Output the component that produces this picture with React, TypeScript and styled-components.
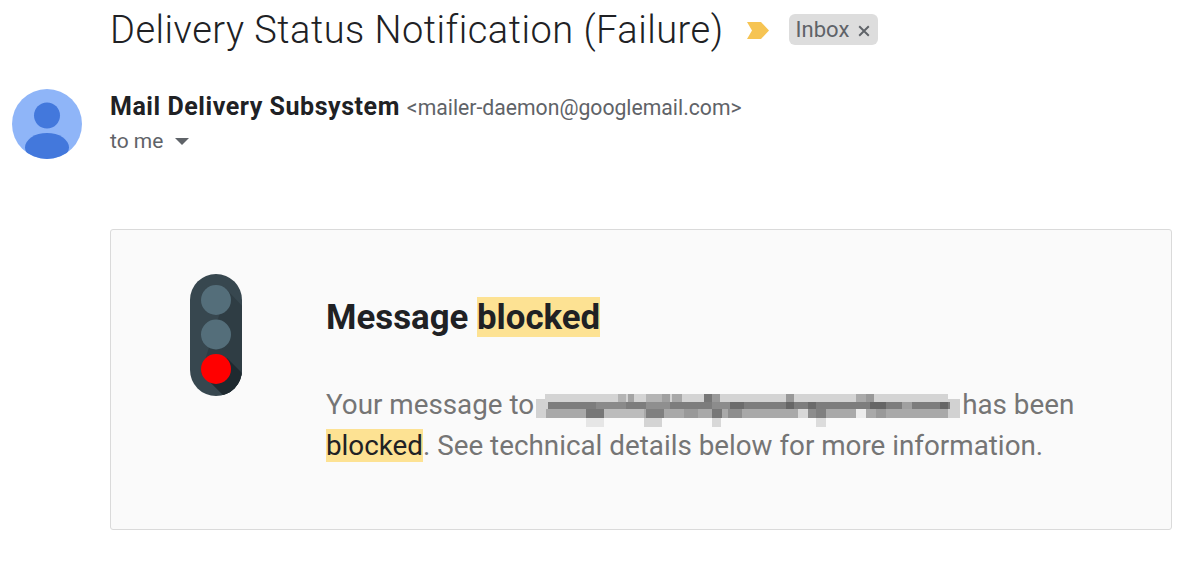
import styled, { createGlobalStyle } from "styled-components";

const GlobalStyle = createGlobalStyle`
  html, body {
    margin: 0;
    padding: 0;
    background: #fff;
    font-family: Roboto, "Liberation Sans", sans-serif;
  }
`;

// tiles of the pixelated address: x, y, width, height, colour
const tiles: [number, number, number, number, string][] = [
  [0, 5, 424, 19, "#d2d2d2"],
  [9, 0, 403, 8, "#d4d4d4"],
  [82, 0, 8, 8, "#b4b4b4"],
  [92, 0, 6, 8, "#a4a4a4"],
  [110, 0, 16, 8, "#b4b4b4"],
  [126, 0, 8, 8, "#a0a0a0"],
  [136, 0, 10, 8, "#a8a8a8"],
  [168, 0, 8, 8, "#777"],
  [176, 0, 8, 8, "#999"],
  [250, 0, 8, 8, "#999"],
  [320, 0, 10, 8, "#aaa"],
  [330, 0, 8, 8, "#999"],
  [12, 8, 402, 7, "#7d7d7d"],
  [60, 8, 30, 7, "#8a8a8a"],
  [110, 8, 24, 7, "#8f8f8f"],
  [176, 8, 18, 7, "#8c8c8c"],
  [194, 8, 14, 7, "#6c6c6c"],
  [250, 8, 8, 7, "#666"],
  [272, 8, 8, 7, "#6a6a6a"],
  [334, 8, 16, 7, "#666"],
  [366, 8, 10, 7, "#a0a0a0"],
  [404, 8, 8, 7, "#666"],
  [10, 15, 402, 9, "#a9a9a9"],
  [50, 15, 18, 9, "#777"],
  [110, 15, 18, 9, "#808080"],
  [68, 15, 40, 9, "#bcbcbc"],
  [148, 15, 14, 9, "#999"],
  [192, 15, 14, 9, "#8e8e8e"],
  [176, 15, 10, 9, "#777"],
  [262, 15, 10, 9, "#d8d8d8"],
  [272, 15, 10, 9, "#8d8d8d"],
  [320, 15, 10, 9, "#ececec"],
  [340, 15, 10, 9, "#999"],
  [50, 24, 18, 9, "#e6e6e6"],
  [108, 24, 18, 9, "#d4d4d4"],
  [176, 24, 9, 9, "#d8d8d8"],
  [280, 15, 10, 9, "#808080"],
  [280, 24, 10, 9, "#dcdcdc"],
];

function Redacted() {
  return (
    <RedactedArt viewBox="0 0 424 34" aria-hidden="true">
      {tiles.map(([x, y, w, h, fill], i) => (
        <rect key={i} x={x} y={y} width={w} height={h} fill={fill} />
      ))}
    </RedactedArt>
  );
}

function TrafficLight() {
  return (
    <LightArt viewBox="0 0 52 122" aria-hidden="true">
      <defs>
        <clipPath id="housing">
          <rect width="52" height="122" rx="26" />
        </clipPath>
      </defs>
      <rect width="52" height="122" rx="26" fill="#37474f" />
      <g clipPath="url(#housing)">
        <polygon points="37,16 60,40 60,122 34,122 11,99" fill="#2f3d44" />
        <polygon points="37,84 60,107 60,122 34,122 15,103" fill="#1f2a30" />
      </g>
      <circle cx="26" cy="26" r="15" fill="#546e7a" />
      <circle cx="26" cy="60.5" r="15" fill="#546e7a" />
      <circle cx="26" cy="95" r="15" fill="#ff0000" />
    </LightArt>
  );
}

export default function App() {
  return (
    <>
      <GlobalStyle />
      <Page>
        <SubjectRow>
          <Subject>Delivery Status Notification (Failure)</Subject>
          <Marker viewBox="0 0 22 17" aria-hidden="true">
            <polygon points="0,0 14,0 22,8.5 14,17 0,17 5,8.5" fill="#f6c453" />
          </Marker>
          <Label>
            Inbox
            <CloseIcon viewBox="0 0 10 10" aria-hidden="true">
              <path d="M1 1 L9 9 M9 1 L1 9" stroke="#5f6368" strokeWidth="1.6" />
            </CloseIcon>
          </Label>
        </SubjectRow>

        <SenderRow>
          <Avatar viewBox="0 0 70 70" aria-hidden="true">
            <defs>
              <clipPath id="disc">
                <circle cx="35" cy="35" r="35" />
              </clipPath>
            </defs>
            <circle cx="35" cy="35" r="35" fill="#8fb5f8" />
            <g clipPath="url(#disc)" fill="#4378dc">
              <circle cx="35" cy="26.5" r="13" />
              <ellipse cx="35" cy="58.5" rx="22" ry="14.5" />
            </g>
          </Avatar>
          <SenderInfo>
            <SenderLine>
              <SenderName>Mail Delivery Subsystem</SenderName>
              <SenderEmail>&lt;mailer-daemon@googlemail.com&gt;</SenderEmail>
            </SenderLine>
            <Recipient>
              to me
              <Caret />
            </Recipient>
          </SenderInfo>
        </SenderRow>

        <Card>
          <TrafficLight />
          <CardBody>
            <Heading>
              Message <Highlight>blocked</Highlight>
            </Heading>
            <Message>
              Your message to<Redacted />has been <Highlight>blocked</Highlight>. See technical details below for more information.
            </Message>
          </CardBody>
        </Card>
      </Page>
    </>
  );
}

const Page = styled.div`
  width: 1200px;
  height: 582px;
  box-sizing: border-box;
  padding: 0 28px 0 12px;
  overflow: hidden;
`;

const SubjectRow = styled.div`
  display: flex;
  align-items: center;
  height: 60px;
  padding-left: 98px;
`;

const Subject = styled.h1`
  margin: 0;
  font-size: 38px;
  font-weight: 300;
  letter-spacing: 0.5px;
  color: #202124;
  white-space: nowrap;
`;

const Marker = styled.svg`
  width: 22px;
  height: 17px;
  margin-left: 23px;
`;

const Label = styled.span`
  display: flex;
  align-items: center;
  gap: 9px;
  height: 31px;
  margin: -2px 0 0 20px;
  padding: 0 8px 0 7px;
  border-radius: 6px;
  background: #dddddd;
  color: #5f6368;
  font-size: 22px;
`;

const CloseIcon = styled.svg`
  width: 12px;
  height: 12px;
  margin-top: 3px;
`;

const SenderRow = styled.div`
  display: flex;
  gap: 28px;
  margin-top: 29px;
`;

const Avatar = styled.svg`
  width: 70px;
  height: 70px;
  flex: none;
`;

const SenderInfo = styled.div`
  display: flex;
  flex-direction: column;
`;

const SenderLine = styled.div`
  display: flex;
  align-items: baseline;
  gap: 7px;
  height: 36px;
  padding-top: 3px;
`;

const SenderName = styled.span`
  font-size: 25px;
  font-weight: 700;
  letter-spacing: 0.55px;
  color: #202124;
`;

const SenderEmail = styled.span`
  font-size: 21.2px;
  color: #5f6368;
`;

const Recipient = styled.div`
  display: flex;
  align-items: center;
  gap: 12px;
  margin-top: -4px;
  font-size: 21px;
  line-height: 34px;
  color: #5f6368;
`;

const Caret = styled.span`
  width: 0;
  height: 0;
  margin-top: 1px;
  border-left: 7px solid transparent;
  border-right: 7px solid transparent;
  border-top: 7px solid #5f6368;
`;

const Card = styled.div`
  display: flex;
  gap: 84px;
  box-sizing: border-box;
  height: 301px;
  margin: 70px 0 0 98px;
  padding: 44px 90px 0 79px;
  background: #fafafa;
  border: 1px solid #dadada;
  border-radius: 3px;
`;

const LightArt = styled.svg`
  width: 52px;
  height: 122px;
  flex: none;
`;

const CardBody = styled.div`
  display: flex;
  flex-direction: column;
  padding-top: 23px;
`;

const Heading = styled.h2`
  margin: 0;
  font-size: 34.8px;
  font-weight: 700;
  line-height: 40px;
  color: #202124;
`;

const Highlight = styled.span`
  background: #fde293;
  color: #202124;
`;

const Message = styled.p`
  margin: 47px 0 0;
  font-size: 27.8px;
  line-height: 41px;
  color: #757575;
`;

const RedactedArt = styled.svg`
  display: inline-block;
  width: 424px;
  height: 34px;
  margin: 0 2px -6px 2px;
  vertical-align: -8px;
`;
